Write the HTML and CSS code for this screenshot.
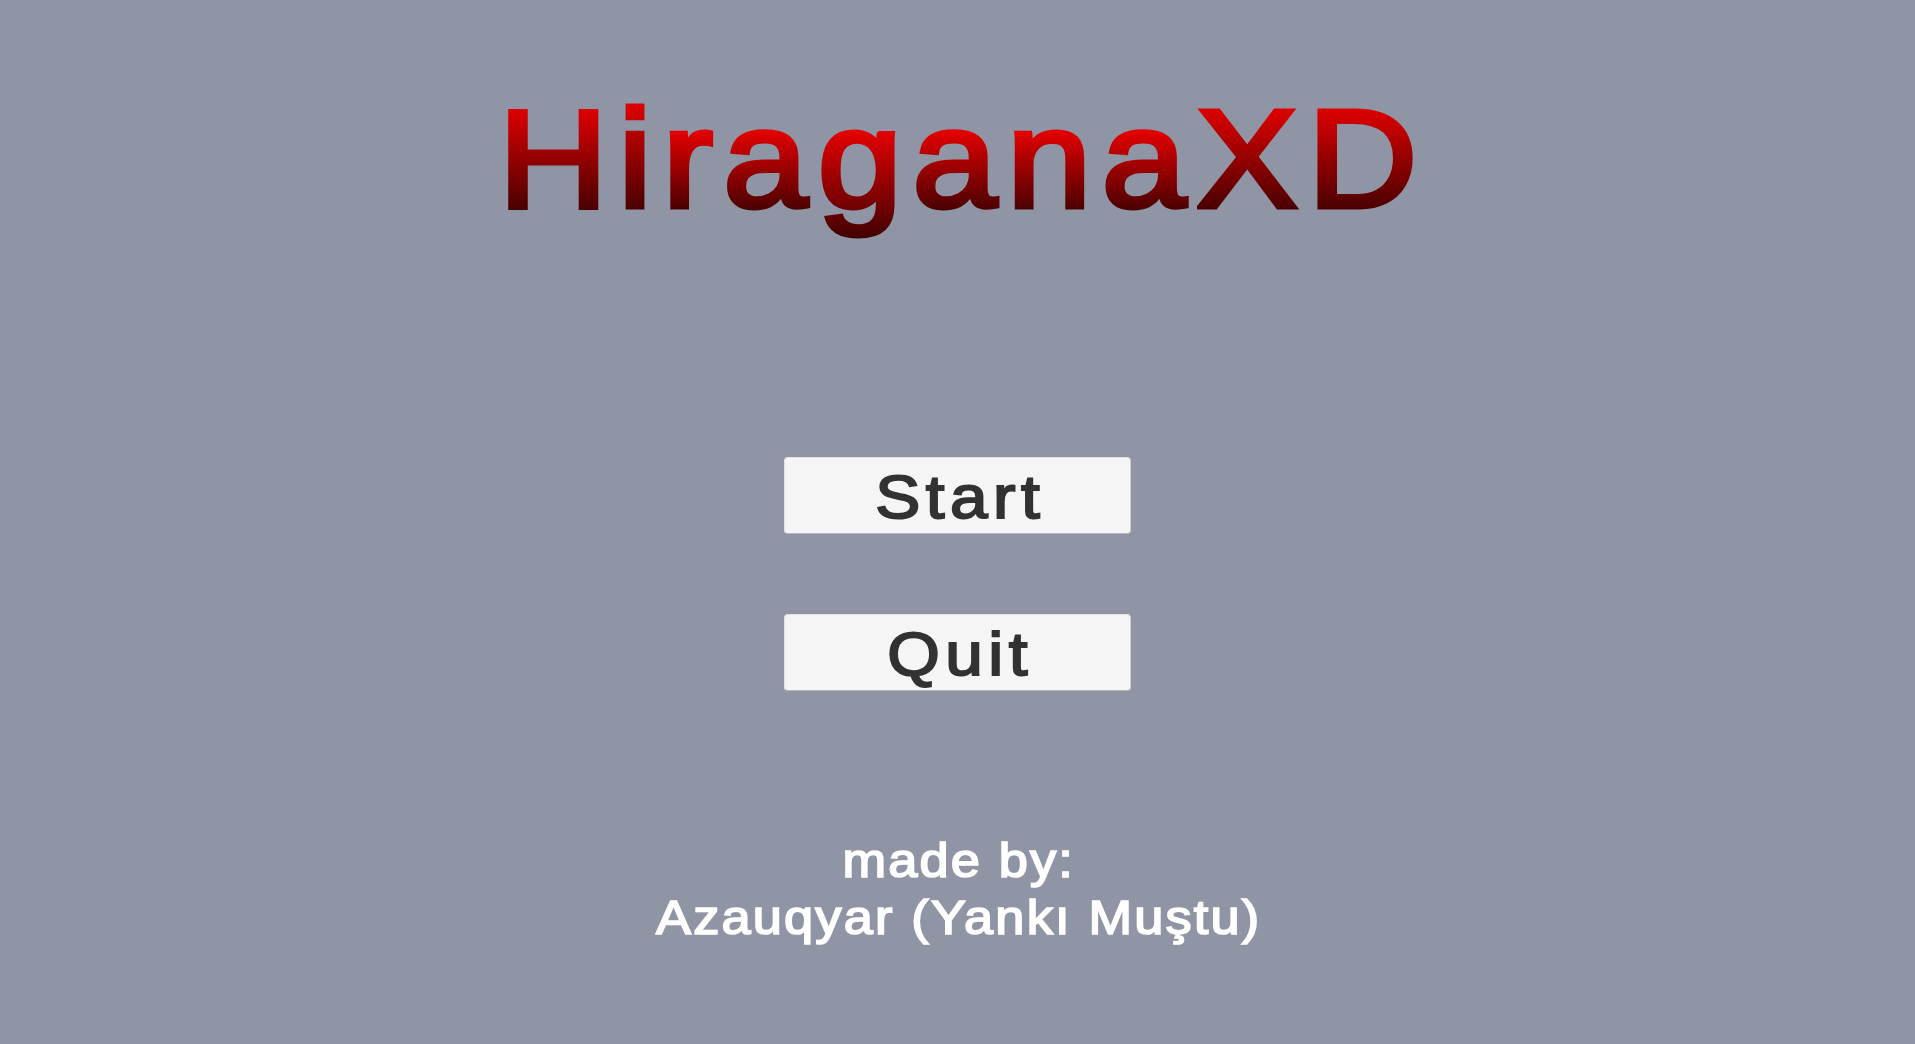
FILE: index.html
```html
<!DOCTYPE html>
<html lang="en">
<head>
<meta charset="utf-8">
<title>HiraganaXD</title>
<link rel="stylesheet" href="styles.css">
</head>
<body>
<main class="screen">
  <h1 class="title"><span class="t cap">H</span><span class="t asc">i</span><span class="t xh">r</span><span class="t xh">a</span><span class="t dsc">g</span><span class="t xh">a</span><span class="t xh">n</span><span class="t xh">a</span><span class="t cap">X</span><span class="t cap">D</span></h1>
  <div class="menu">
    <button class="btn"><span class="btn-label">Start</span></button>
    <button class="btn"><span class="btn-label">Quit</span></button>
  </div>
  <footer class="credits">
    <p>made by:</p>
    <p>Azauqyar (Yankı Muştu)</p>
  </footer>
</main>
</body>
</html>
```
FILE: styles.css
```css
html, body {
  margin: 0;
  padding: 0;
  background: #8f95a4;
}

.screen {
  width: 1915px;
  height: 1044px;
  display: flex;
  flex-direction: column;
  align-items: center;
  padding-top: 91px;
  box-sizing: border-box;
  font-family: "Liberation Sans", Arial, sans-serif;
}

.title {
  margin: 0;
  font-size: 139px;
  font-weight: normal;
  line-height: 136px;
  letter-spacing: 9.5px;
  white-space: nowrap;
  transform: scaleX(1.09);
  transform-origin: center;
  padding-left: 9.5px;
}

.t {
  color: transparent;
  -webkit-text-fill-color: transparent;
  -webkit-text-stroke: 5px transparent;
  -webkit-background-clip: text;
  background-clip: text;
  padding-bottom: 14px;
}

.cap {
  background-image: linear-gradient(to bottom, #e60000 0px, #e60000 23px, #4a0000 128px, #4a0000 200px);
}
.asc {
  background-image: linear-gradient(to bottom, #e60000 0px, #e60000 17px, #4a0000 128px, #4a0000 200px);
}
.xh {
  background-image: linear-gradient(to bottom, #e60000 0px, #e60000 49px, #4a0000 129px, #4a0000 200px);
}
.dsc {
  background-image: linear-gradient(to bottom, #e60000 0px, #e60000 49px, #400000 158px, #400000 200px);
}

.menu {
  margin-top: 230px;
  display: flex;
  flex-direction: column;
  gap: 80px;
}

.btn {
  width: 347px;
  height: 77px;
  box-sizing: border-box;
  background: #f5f5f5;
  border: 1px solid #e2e2e2;
  border-bottom-color: #b9b9b9;
  border-right-color: #cdcdcd;
  border-radius: 4px;
  padding: 2px 0 0 0;
  display: flex;
  align-items: center;
  justify-content: center;
  cursor: pointer;
}

.btn-label {
  display: inline-block;
  font-family: "Liberation Sans", Arial, sans-serif;
  font-size: 62px;
  line-height: 72px;
  letter-spacing: 5px;
  padding-left: 5px;
  color: #323232;
  -webkit-text-stroke: 2px #323232;
  transform: scaleX(1.09);
}

.credits {
  margin-top: 141px;
  text-align: center;
  color: #ffffff;
  font-size: 48px;
  line-height: 57px;
  letter-spacing: 2px;
  padding-left: 2px;
  -webkit-text-stroke: 1.7px #ffffff;
  transform: scaleX(1.09);
}

.credits p {
  margin: 0;
}
```
